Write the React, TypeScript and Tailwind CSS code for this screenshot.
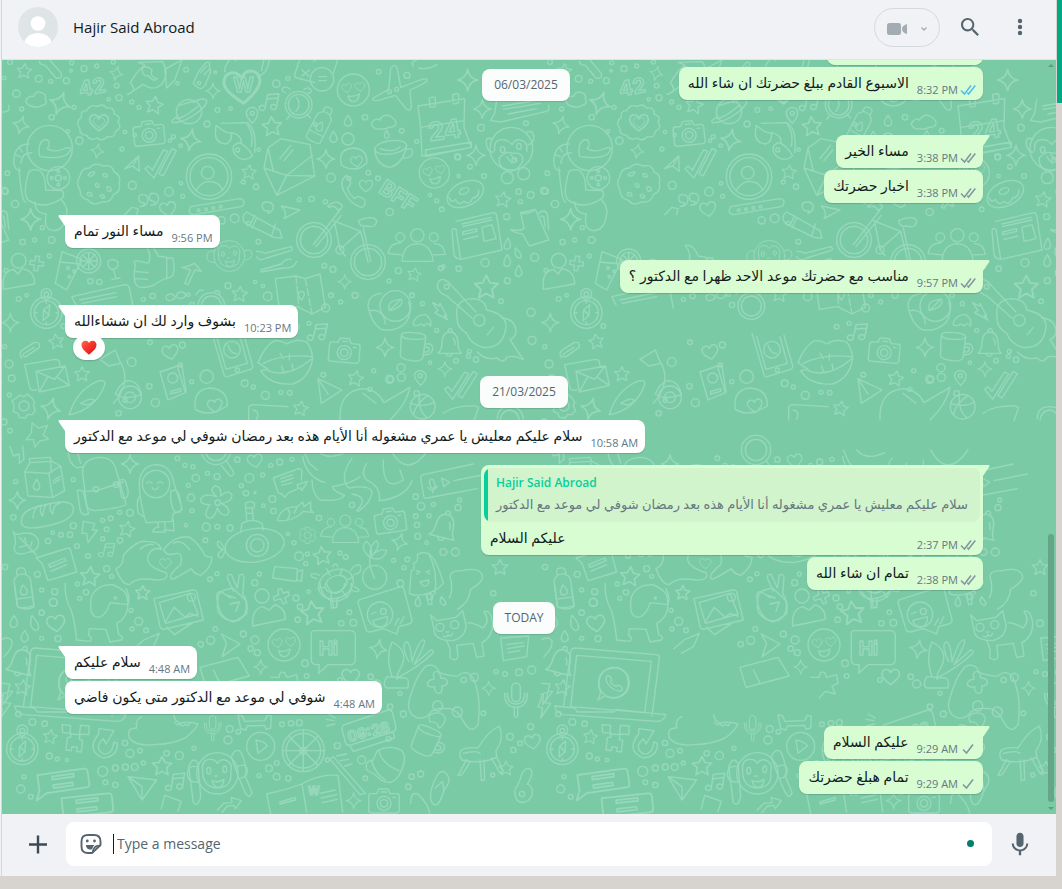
import type { ReactNode } from "react";

type Message = {
    id: number;
    text: string;
    time: string;
    out?: boolean;
    tail?: boolean;
    status?: "read" | "delivered" | "sent";
    quote?: { name: string; text: string };
    reaction?: boolean;
};

/* ---------- wallpaper ---------- */

function Star({ x, y, r = 26, a = 0 }: { x: number; y: number; r?: number; a?: number }) {
    return (
        <path
            transform={`translate(${x} ${y}) rotate(${a}) scale(${r / 26})`}
            d="M0-25 8-9 25-7 12 5 16 23 0 14-16 23-12 5-25-7-8-9Z"
        />
    );
}

function Spark({ x, y, r = 26, a = 0 }: { x: number; y: number; r?: number; a?: number }) {
    return (
        <path
            transform={`translate(${x} ${y}) rotate(${a}) scale(${r / 26})`}
            d="M0-28Q3-4 26 0 4 4 0 28-4 4-26 0-4-4 0-28Z"
        />
    );
}

function Heart({ x, y, r = 24, a = 0 }: { x: number; y: number; r?: number; a?: number }) {
    return (
        <path
            transform={`translate(${x} ${y}) rotate(${a}) scale(${r / 24})`}
            d="M0 22C-14 12-25 2-24-8-22-22-6-24 0-11 6-24 22-22 24-8 25 2 14 12 0 22Z"
        />
    );
}

function Place({ x, y, a = 0, s = 1, children }: { x: number; y: number; a?: number; s?: number; children: ReactNode }) {
    return <g transform={`translate(${x} ${y}) rotate(${a}) scale(${s})`}>{children}</g>;
}

function Camera() {
    return (
        <>
            <path d="M-38-25h16l6-14h28l6 14h20q8 0 8 8v42q0 8-8 8h-76q-8 0-8-8v-42q0-8 8-8Z" />
            <circle cy="4" r="21" />
            <circle cy="4" r="11" />
            <path d="M-8-30H8M26-14h8" />
        </>
    );
}

function LoveFace() {
    return (
        <>
            <circle r="48" />
            <Heart x={-20} y={-6} r={15} a={-12} />
            <Heart x={20} y={-10} r={15} a={-6} />
            <path d="M-16 18q18 4 34-6-2 22-17 23-13 0-17-17Z" />
        </>
    );
}

function Group() {
    return (
        <>
            <circle cy="-40" r="21" />
            <path d="M-48 42q2-54 48-56 44 2 50 56Z" />
            <circle cx="-54" cy="-34" r="14" />
            <circle cx="52" cy="-34" r="14" />
            <path d="M-48 22-92 18q4-34 40-34M50 22l38-2Q84-14 54-14" />
        </>
    );
}

function Person() {
    return (
        <>
            <circle cy="-38" r="22" />
            <path d="M-46 48q-6-54 30-60l14 14L10-14q38 6 38 46Z" />
            <path d="M34-36h14v-16h12v16h14v12H60v16H48v-16H34Z" transform="rotate(8 54 -30)" />
        </>
    );
}

function Compass() {
    return (
        <>
            <circle r="47" />
            <circle r="36" />
            <circle cy="-56" r="16" />
            <circle cy="-55" r="7" />
            <path d="M10-24 8 8-10 24-8-8ZM-8-8 8 8M0-36v8M0 36v-8M-36 0h8M36 0h-8" />
        </>
    );
}

function Bell() {
    return (
        <path d="M-34 24q12-10 12-34 2-30 24-30t24 32q0 22 10 32ZM-10 25q8 16 20 0M-4-40q0-10 7-10t6 10M12-20q6 8 6 18" />
    );
}

function Mic() {
    return <path d="M-13-38a13 15 0 0 1 26 0v26a13 15 0 0 1-26 0ZM-34-22q0 42 34 42t34-42M-26-22q0 32 26 32t26-32M-5 20v26q5 8 10 0V20" />;
}

function Bottle() {
    return <path d="M-14-52q0-12 14-12t14 12v12q12 6 12 18V56q0 6-26 6t-26-6v-78q0-12 12-18ZM-14-44h28M-26 32h52M0-10q-22 30 0 32 22-2 0-32Z" />;
}

function Ticks() {
    return <path d="M-52 12l10-8 12 14 38-58 12 6-48 76ZM-12 30l46-72 12 8-46 72-12-8" />;
}

function Note() {
    return <path d="M-12 20V-18L18-26V12M-12-6 18-14M-12 20a8 7 0 1 1-4-6M18 12a8 7 0 1 1-4-6" />;
}

function Bubble({ w = 100, h = 60 }: { w?: number; h?: number }) {
    return (
        <path
            d={`M${-w / 2} ${-h / 2}H${w / 2}q8 0 8 8V${h / 2}q0 8-8 8H${-w / 2 + 8}l-26 14 10-22V${-h / 2}ZM${-w / 4} -10H${w / 4}v7H${-w / 4}ZM${-w / 4} 10H${w / 5}v7H${-w / 4}Z`}
        />
    );
}

function Bicycle() {
    return (
        <>
            <circle cx="-104" cy="-8" r="52" />
            <circle cx="-104" cy="-8" r="41" />
            <circle cx="58" cy="58" r="52" />
            <circle cx="58" cy="58" r="41" />
            <path d="M-106 6-26-98 M-98 12-22-82M-62-110q24-20 38-6 12 14-10 18-6-16-26-8ZM-46-66 36-34-26 20-42-60M-26 20-10 40M36-34 58 58M44-44 66 56M30-66q42-18 54 0-2 24-30 16-22 4-24-16Z" />
            <circle cx="-26" cy="22" r="12" />
        </>
    );
}

function Mug() {
    return <path d="M-38-30q0-12 37-8 37 2 36 14l-8 60q-4 14-34 10-34-4-34-16Zm0 0q6 12 40 12 30 2 33-8M34-4q24-4 22 16-4 18-27 16M34 6q14-2 12 8-4 8-14 6" />;
}

function Calendar() {
    return (
        <>
            <path d="M-72-50 68-72l-2 86 22 60-148 26-4-82ZM-64 14 66-6M-50 82l138-24v16L-48 102ZM-38-74q10-4 18-2v26q-10 6-16 2ZM32-84q10-4 18-2v26q-10 6-16 2Z" />
            <text x="-44" y="50" fontSize="76" transform="rotate(-8)">24</text>
        </>
    );
}

function Envelope() {
    return <path d="M-60-56-22-84 66-66 80 28-34 86-72 4ZM-72 4-4 26 80 28M-34 86-4 26 74-34M-60-56-44 14M-24-24l32-40M-12-18 14-50" />;
}

function Astronaut() {
    return (
        <>
            <circle cx="0" cy="0" r="68" />
            <path d="M-32 12q0-42 26-36 10 14-2 26Q14 16 50 0q24-6 4 18-22 16-82 8-4-2-4-14Z" />
            <path d="M-62-12q-44 0-46 54 4 28 20 26M-54 14q-30 0-32 32M-90 0l8 12M-104 20l16 6M-92 60q8 104 20 102M-62 70q-22 72 0 88 42 26 88 0 24-10 12-30l-50-2q0-50-22-60-22-4-28 6Z" />
            <circle cx="26" cy="90" r="34" />
            <circle cx="26" cy="90" r="9" />
            <circle cx="26" cy="70" r="4" />
            <circle cx="26" cy="110" r="4" />
            <circle cx="6" cy="90" r="4" />
            <circle cx="46" cy="90" r="4" />
            <path d="M-44 162q0 34 34 36-10 46 20 50 34 0 40-46 8-20-14-46" />
        </>
    );
}

function Cookie() {
    return (
        <>
            <path d="M-60-24q4-24 28-24 18-20 40-6 30-6 34 18 22 8 16 34 6 24-18 34-8 26-36 22-24 14-40-6-24-4-24-30-14-20 0-42Z" />
            <path d="M-36-28q10-10 20-8-4 14-16 12ZM8-30q14-4 14 8-12 4-14-8ZM-14 0q10-4 12 8-12 6-12-8ZM20 10q12-6 14 10-14 6-14-10ZM-38 26q14-4 14 10-16 2-14-10ZM0 34q12-6 14 6-10 6-14-6Z" />
        </>
    );
}

function Laptop() {
    return (
        <>
            <path d="M-120-92q2-12 14-12l244 20q10 2 8 12l-22 172M-120-92l-22 166M-102-82l224 18-20 154-222-18ZM-168 70l60 6 8 12h110l6-8 150 16q-8 20-26 20L-140 96q-24-4-28-26Z" />
            <circle cx="10" cy="0" r="46" />
            <path d="M-38 52l8-22q-16-42 12-66 44-22 66 12 16 46-20 64-22 10-46 0Z" />
            <path d="M-8-22q-12 8 0 26t34 22q14-4 6-14-12-8-16 0-14-8-16-16 8-10-8-18Z" />
        </>
    );
}

function Monkey() {
    return (
        <>
            <circle r="62" />
            <path d="M-44-6q-4-36 22-36 16 0 22 12 8-14 24-10 24 8 16 36 6 46-40 48-44-2-44-50Z" />
            <ellipse cx="-26" cy="-8" rx="6" ry="10" />
            <ellipse cx="22" cy="-12" rx="6" ry="10" />
            <path d="M-8 8h8M-16 22q18 8 36-4-2 24-18 24-14-2-18-20ZM-60-20q-30-6-30 24 2 24 32 22M60-20q24-12 30 8 2 24-24 28" />
        </>
    );
}

// circles are [x, y, r] in the sheet's own units
const DOTS_TOP = [
    [30, 6, 7], [116, 56, 10], [152, 64, 6], [199, 62, 9], [215, 8, 6], [252, 26, 9], [213, 32, 4], [290, 18, 6], [340, 6, 6], [350, 77, 7], [13, 54, 5], [49, 101, 11],
    [65, 147, 6], [155, 172, 8], [222, 142, 6], [326, 118, 5], [357, 113, 9], [395, 126, 6], [238, 242, 11], [204, 214, 5], [375, 216, 5], [417, 142, 6], [366, 267, 6], [397, 376, 12],
    [22, 340, 7], [16, 394, 9], [45, 432, 11], [404, 225, 5], [520, 230, 6], [542, 257, 5], [510, 242, 5], [621, 192, 9], [652, 150, 7], [692, 146, 5], [558, 29, 7], [532, 70, 5],
    [597, 69, 5], [646, 37, 4], [829, 71, 11], [864, 55, 6], [507, 395, 13], [543, 370, 5], [548, 409, 6], [730, 366, 6], [768, 380, 8], [713, 270, 6], [776, 269, 5], [993, 353, 13],
    [1047, 355, 6], [945, 193, 5], [898, 419, 6], [935, 417, 8], [976, 425, 6], [1136, 35, 7], [1221, 46, 9], [1095, 172, 8], [1205, 212, 7], [1250, 244, 6], [1373, 292, 8], [1105, 338, 7],
    [1134, 355, 7], [1376, 348, 5], [1290, 405, 5], [1310, 422, 6], [1169, 456, 11], [1325, 448, 7], [127, 503, 6], [68, 546, 8], [104, 540, 6], [155, 540, 10], [148, 588, 6], [271, 664, 8],
    [298, 666, 8], [18, 631, 6], [56, 717, 7], [80, 706, 5], [190, 798, 7], [27, 912, 12], [35, 955, 10], [14, 860, 6], [665, 481, 11], [704, 475, 13], [745, 490, 6], [775, 545, 7],
    [765, 666, 5], [789, 678, 5], [803, 709, 13], [684, 677, 9], [430, 718, 6], [458, 708, 8], [565, 704, 5], [576, 735, 8], [973, 617, 7], [999, 628, 9], [993, 706, 7], [1065, 706, 9],
    [1022, 726, 6], [977, 744, 12], [890, 800, 7], [927, 790, 6], [395, 906, 13], [450, 847, 7], [547, 855, 9], [448, 979, 8], [466, 1028, 12], [575, 965, 6], [541, 915, 6], [734, 970, 10],
    [760, 981, 6], [796, 1006, 12], [843, 997, 6], [869, 998, 7], [970, 944, 7], [1195, 632, 9], [1167, 663, 6], [1236, 706, 7], [1267, 731, 6], [1310, 811, 6], [1405, 889, 6], [1204, 952, 12],
    [1171, 958, 9], [1121, 932, 6], [1110, 988, 6], [1290, 908, 5], [356, 1060, 8], [375, 1021, 6], [28, 1005, 6], [12, 1086, 9], [30, 1112, 7], [1340, 680, 7], [1250, 1000, 8], [1330, 620, 5],
    [1543, 300, 7], [1443, 203, 10], [1578, 190, 7], [1373, 290, 9], [1410, 320, 7], [1452, 348, 7], [1556, 395, 8], [1592, 405, 10], [1561, 425, 6], [1520, 470, 9], [1632, 392, 10], [1322, 625, 7],
    [1455, 608, 12], [1522, 662, 9], [1376, 626, 8], [1604, 592, 12], [1503, 724, 7], [1593, 757, 12], [1596, 841, 12], [1408, 874, 6], [1368, 902, 7], [1428, 899, 8], [1203, 923, 12], [1169, 958, 12],
];
const DOTS_MID = [
    [532, 25, 7], [555, 46, 6], [579, 50, 6], [587, 84, 11], [565, 106, 6], [573, 143, 11], [576, 182, 6], [622, 70, 6], [651, 80, 9], [712, 29, 8], [788, 75, 6], [748, 84, 13],
    [724, 107, 6], [738, 130, 8], [765, 128, 3], [817, 147, 10], [820, 183, 8], [790, 167, 5], [47, 95, 6], [220, 89, 6], [40, 202, 8], [220, 227, 9], [210, 254, 8], [183, 254, 7],
    [158, 248, 5], [144, 273, 8], [231, 288, 7], [308, 211, 6], [332, 205, 7], [359, 187, 6], [390, 188, 10], [320, 238, 7], [308, 266, 6], [360, 271, 8], [264, 318, 7], [320, 356, 9],
    [335, 379, 6], [112, 373, 9], [15, 351, 8], [125, 420, 6], [164, 425, 9], [160, 457, 12], [232, 402, 6], [258, 427, 8], [239, 445, 6], [558, 226, 5], [619, 231, 12], [652, 230, 7],
    [690, 234, 9], [616, 271, 7], [630, 388, 7], [651, 371, 6], [764, 398, 9], [778, 372, 6], [864, 252, 5], [882, 278, 6], [897, 319, 13], [922, 312, 6], [917, 341, 6], [957, 204, 8],
    [888, 444, 9], [926, 425, 5], [1020, 309, 6], [1037, 321, 7], [1056, 165, 8], [1247, 140, 8], [1263, 169, 11], [1300, 163, 6], [1247, 199, 7], [1287, 197, 6], [1251, 225, 8], [1253, 259, 9],
    [1280, 278, 5], [1222, 328, 7], [1181, 331, 6], [1212, 353, 6], [1201, 400, 10], [1330, 306, 10], [1366, 306, 12], [1374, 173, 9], [1379, 150, 6], [812, 46, 6], [839, 36, 9], [876, 28, 6],
];
const DOTS_LOW = [
    [125, 68, 8], [160, 37, 12], [125, 145, 6], [174, 146, 9], [393, 61, 6], [416, 94, 12], [438, 121, 7], [396, 117, 6], [646, 117, 7], [632, 151, 12], [602, 163, 8], [730, 132, 9],
    [765, 150, 12], [752, 176, 8], [772, 188, 9], [915, 220, 10], [900, 50, 8], [893, 89, 8], [1048, 67, 7], [1060, 98, 10], [1024, 100, 8], [920, 258, 7], [1020, 270, 7], [55, 372, 8],
    [97, 396, 10], [134, 401, 8], [375, 459, 8], [390, 490, 12], [420, 482, 7], [148, 498, 9], [172, 507, 6], [201, 510, 5], [308, 544, 15], [346, 534, 9], [376, 531, 9], [404, 531, 10],
    [430, 519, 6], [316, 577, 7], [346, 585, 8], [72, 560, 6], [62, 597, 12], [92, 620, 7], [500, 490, 8], [538, 497, 12], [582, 475, 6], [684, 450, 12], [689, 417, 10], [715, 425, 7],
    [846, 403, 7], [873, 400, 8], [898, 398, 9], [1012, 467, 9], [1085, 510, 12], [1096, 565, 7], [982, 510, 6], [830, 519, 7], [807, 535, 10], [830, 560, 10], [777, 557, 6], [865, 565, 8],
    [1112, 260, 8], [1130, 282, 12], [1170, 350, 8], [1200, 310, 6], [1210, 372, 9], [1166, 447, 7], [1235, 560, 8], [1262, 552, 9], [1225, 590, 8], [1391, 270, 8], [1423, 262, 12], [1450, 370, 7],
    [1488, 245, 6], [1515, 252, 7], [1557, 247, 10], [1595, 240, 12], [1592, 410, 9], [1530, 440, 10], [1560, 460, 7], [1478, 555, 6], [1500, 100, 10], [1290, 20, 9], [1480, 10, 8], [1540, 480, 8],
];

function Dots({ items }: { items: number[][] }) {
    return (
        <>
            {items.map(([x, y, r], i) => (
                <circle key={i} cx={x} cy={y} r={r} />
            ))}
        </>
    );
}

function TopDoodles() {
    return (
        <g>
            <Dots items={DOTS_TOP} />
            <Star x={73} y={33} r={23} a={5} />
            <Star x={463} y={135} r={27} a={10} />
            <Star x={816} y={199} r={30} a={-5} />
            <Star x={747} y={336} r={22} a={5} />
            <Star x={719} y={702} r={24} a={5} />
            <Star x={169} y={844} r={23} a={-10} />
            <Star x={246} y={942} r={23} />
            <Star x={1067} y={955} r={24} a={10} />
            <Star x={1243} y={643} r={21} a={10} />
            <Star x={902} y={1045} r={23} a={10} />
            <Star x={1459} y={681} r={36} />
            <Star x={1509} y={418} r={24} a={8} />
            <Spark x={349} y={40} r={20} a={15} />
            <Spark x={180} y={130} r={32} a={20} />
            <Spark x={639} y={93} r={22} />
            <Spark x={63} y={195} r={25} a={15} />
            <Spark x={572} y={240} r={30} a={10} />
            <Spark x={292} y={273} r={20} a={10} />
            <Spark x={978} y={297} r={26} />
            <Spark x={1403} y={60} r={30} />
            <Spark x={1428} y={286} r={28} />
            <Spark x={1447} y={147} r={26} />
            <Spark x={92} y={478} r={30} />
            <Spark x={31} y={788} r={26} />
            <Spark x={1034} y={665} r={20} />
            <Spark x={1155} y={862} r={26} />
            <Spark x={1335} y={927} r={21} />
            <Spark x={152} y={1046} r={30} a={15} />
            <text x="236" y="104" fontSize="62" transform="rotate(-10 270 80)">42</text>
            <text x="1144" y="402" fontSize="64" transform="rotate(32 1150 380)">BFF</text>

            {/* clouds */}
            <path d="M92 138q-18-6-12-22 10-10 20-6 8-20 24-12 16 4 12 18 8 18-10 20-10 10-34 2ZM1126 206q-20-12-6-24 10-8 18-2 14-20 32-12 20 12 18 24-4 10-20 10-14 8-42 4ZM1240 20q-10-14 10-20M1256 24q30 6 54-10" />
            {/* banana, unicorn and hand along the top edge */}
            <path d="M118 4q0 10 18 12l32 38q20 4 16-14L150 0M381 103q34-10 10-34 22-40 44-54l-20-8 72-2q24 36-4 70-24 20-54-2l-44 30ZM428 22q14-6 28 8-8 22 16 26-12 12-26-8-24 0-18-26ZM500 84 494 28 546 0 524 60ZM580 70 596 34 618 8q14-6 10 12l4 16-18 42q-12 18-34-8ZM602 38l18-20M612 44l18-18" />
            {/* w heart with flames */}
            <Heart x={727} y={80} r={54} a={-5} />
            <path d="M674 36Q672 14 700-12l6 14Q720-10 722-24M778 48q24-8 30-48M784 32l12-50" />
            <text x="700" y="96" fontSize="60">W</text>
            {/* calculator */}
            <path d="M902-10 884 44q0 8 8 10l52 14M1016-10 1000 40M906 30l20 18M928 30l-22 18M960-5l-20 8M956 50h22M956 62h22" />
            <circle cx="966" cy="58" r="35" />
            <Place x={1060} y={90}>
                <LoveFace />
            </Place>
            {/* plane */}
            <path d="M1172 26q12-20 20 0l10 56 58-22q26-8 20 4-18 14-50 26l4 52q-4 14-16 4l-32-40-54 16q-20 0-12-8l46-26Z" />
            <circle cx="1168" cy="95" r="6" />
            <circle cx="1190" cy="88" r="6" />
            {/* heart badge */}
            <path d="M244 172q-4-20 16-20 12-22 32-12 16-12 28 4 24-4 22 18 24 8 12 24 14 18-8 28 0 20-24 16-16 16-30 4-22 10-32-8-24-2-20-20-16-18 4-34Z" />
            <Heart x={297} y={187} r={28} />
            <Heart x={297} y={187} r={17} />
            <Place x={447} y={222} a={-6}>
                <Camera />
            </Place>
            {/* planet */}
            <ellipse cx="567" cy="155" rx="38" ry="36" />
            <path d="M534 168q-26 16-16 20 34 2 80-34 32-28 18-36-16-4-36 10M530 176q20 0 68-40M538 136l40-12" />
            {/* map pin */}
            <path d="M757 190q-20-20-18-34 6-14 20-14 14 4 14 16 0 14-16 32Z" />
            <circle cx="757" cy="160" r="6" />
            <Place x={812} y={126} a={10} s={1.1}>
                <Note />
            </Place>
            {/* alarm clock */}
            <circle cx="896" cy="134" r="40" />
            <circle cx="896" cy="134" r="31" />
            <path d="M888 112q12 10 8 28l-8 14M856 98q-14-6-8-14 10-8 22 4M912 88q14-10 22 4-2 10-10 6M868 168l-8 10M922 164l10 10" />
            <Place x={962} y={194} a={27} s={0.9}>
                <Bottle />
            </Place>
            <path d="M1044 166q-22 28 0 32 22-4 0-32ZM1000 214q-20 28 0 34 22-6 0-34ZM1160 212q-14 20 0 24 14-4 0-24Z" />
            {/* sunglasses */}
            <path d="M648 196q30 26 46 22 4 26-16 34-32-2-32-32ZM664 190 742 188q30 22 22 90M694 218q30 6 30 30M718 248q24 10 40 40-22 18-44 4-18-14-14-32 6-10 18-12ZM742 194q20 26 12 64" />
            {/* love heart person */}
            <circle cx="1044" cy="237" r="18" />
            <path d="M1024 314q-12-48 38-50 42 4 38 46l-20 14q-36 8-56-10Z" />
            <Heart x={1070} y={304} r={18} a={-8} />
            {/* coffee cup */}
            <ellipse cx="1172" cy="262" rx="48" ry="20" transform="rotate(-8 1172 262)" />
            <path d="M1124 268q4 46 44 54 40-8 52-64M1218 270q20-10 20 8-4 18-30 16M1140 266q40 14 60-6" />
            <Place x={1326} y={188}>
                <Calendar />
            </Place>
            <Place x={1303} y={339} a={-5} s={0.94}>
                <LoveFace />
            </Place>
            <Place x={149} y={264}>
                <Astronaut />
            </Place>
            <Place x={300} y={372}>
                <Cookie />
            </Place>
            {/* paper plane, ticks, avatar */}
            <path d="M374 326 416 288 418 334 398 318ZM398 318 416 288" />
            <Place x={486} y={310} a={-5}>
                <Ticks />
            </Place>
            <circle cx="627" cy="350" r="68" />
            <circle cx="627" cy="350" r="57" />
            <circle cx="623" cy="338" r="19" />
            <path d="M588 392q16-28 42-28 28 2 38 26" />
            <Place x={864} y={320}>
                <Envelope />
            </Place>
            {/* phone handset */}
            <path d="M1040 346q-24 16-8 48 16 36 50 48 18-4 12-22-22-18-30-4-20-18-22-32 20-14-2-38Z" />
            <Heart x={1098} y={377} r={20} />
            {/* quote marks, pencil, ruler */}
            <path d="M430 404q-14-2-14 12 2 14 16 12 6 8-12 12 24-2 24-22-2-14-14-14ZM462 400q-14-2-14 12 2 14 16 12 6 8-12 12 24-2 24-22-2-14-14-14ZM800 426q-14 0-14 14 4 16 20 12l-2 8q16-6 16-22-4-12-20-12Z" />
            <Heart x={504} y={447} r={24} a={-10} />
            <path d="M572 440 718 416q12 0 14 10 0 12-10 14L582 464q-14 0-14-10 0-10 4-14ZM374 464l22-22 18 4-4 18M844 438l56 12-48 26q12-18-8-38ZM740 456l100 56 6 22-24-2-86-42q-16-20 4-34ZM826 492l-12 38M770 474l-14 30M764 466l-14 30" />
            <circle cx="596" cy="451" r="4" />
            <circle cx="618" cy="448" r="4" />
            <circle cx="640" cy="444" r="4" />
            <circle cx="662" cy="440" r="4" />
            <Place x={1046} y={548}>
                <Bicycle />
            </Place>
            <Place x={1252} y={564} s={0.95}>
                <Group />
            </Place>
            {/* donut */}
            <ellipse cx="1396" cy="402" rx="58" ry="36" transform="rotate(-25 1396 402)" />
            <ellipse cx="1392" cy="393" rx="15" ry="9" transform="rotate(-25 1392 393)" />
            <path d="M1346 412q10 20 20 6 10 22 26 6 16 14 26-10 20-2 18-24" />
            {/* speech sheet and hushed monkey */}
            <path d="M1490 120l-6 40-12 22 30 4 138-32q10-4 6-18M1508 138l108-18M1510 148l110-18M1524 162l86-16" />
            <circle cx="1534" cy="266" r="64" />
            <path d="M1484 272q-4-40 34-32 10 4 18 14 10-18 26-14 24 6 18 34M1478 238q-24-12-18 20 6 20 20 18M1578 218q20-12 24 14-2 20-18 22M1498 294q20-24 40-14 34-4 30 24-16 34-46 30-28-14-24-40ZM1520 290l16 20M1532 284l16 18" />
            <ellipse cx="1508" cy="269" rx="7" ry="9" />
            <ellipse cx="1557" cy="259" rx="7" ry="9" />
            <circle cx="1522" cy="353" r="18" />
            <circle cx="1571" cy="341" r="18" />
            {/* newspaper */}
            <path d="M1368 484l112-26q8 0 10 8l16 104-124 28q-16-2-20-14l-6-72q0-10 12-4l14 90M1386 492l88-20M1388 500l88-20M1388 516l42-10v8l-42 10ZM1392 538l42-10M1446 502l30-8 12 42-36 8Z" />
            {/* watering can with drops */}
            <path d="M1562 458l44-10 40 92-58 18-20-36q-34-6-36-14 24 8 40-2ZM1562 458q20 8 44-10M1614 462q20-18 28 0l4 46M1622 470q8-6 10 4l4 26M1524 534q-22 34-2 34 18-4 2-34ZM1546 564q-4 32 14 30 12-8-14-30ZM1522 584q-20 32-2 36 22-6 2-36ZM1556 616q-20 30 0 34 20-6 0-34Z" />
            {/* guitar */}
            <path d="M1312 680q0-22 18-22 16 6 24 18l74 80M1312 680q8 22 26 26l78 68M1372 780q-12-60 42-64 42 0 46 34 58 12 58 50-8 68-70 62-36-10-48-42-30-20-28-40ZM1462 824l18-22" />
            <circle cx="1438" cy="781" r="17" />
            <path d="M1506 774q40 4 42 40-2 20-18 24 20 34 40 60-30-14-50-6-8 20-30 2-34 8-58-18" />
            <Place x={56} y={640}>
                <Person />
            </Place>
            {/* drinks */}
            <path d="M186 575 246 598 200 690 166 670ZM180 606l62 6" />
            <circle cx="266" cy="603" r="36" />
            <circle cx="266" cy="603" r="26" />
            <path d="M266 577v52M240 603h52M248 585l36 36M284 585l-36 36M324 604q-2 22 14 24 18-2 16-22-14-14-30-2ZM340 628l8 28M336 658l24-4" />
            <circle cx="204" cy="624" r="4" />
            <circle cx="222" cy="634" r="4" />
            <circle cx="208" cy="650" r="4" />
            {/* thumbs up */}
            <path d="M446 610q10-30-10-54 24-6 38 32l26 4v62q-28 12-40 22-40 14-52-2-10-16-2-60-8-10 4-12ZM500 594l18 0q8 28 0 54l-18 8M404 634l40 4M406 656l36 2" />
            <path d="M546 622q24-4 38-12l20 24-20-4-20 44-10-4 18-40Z" />
            <Place x={688} y={588} s={0.75}>
                <Monkey />
            </Place>
            <path d="M770 574q16 0 24 6l78-20q12 8 0 12l-72 22q-24 12-30-4M782 630l62-18q14-18 30-14M782 636l68-12q30 4 40-20" />
            {/* map */}
            <path d="M826 656 888 648 916 656 960 642 976 742 936 762 892 740 838 748Z" />
            <path d="M888 648l8 90M916 656 936 762" strokeDasharray="22 8" />
            <path d="M904 720q-18-22 0-26 18 4 0 26Z" />
            <Place x={139} y={758}>
                <Compass />
            </Place>
            <path d="M216 710l158-36q12 0 14 10l12 60M216 710q4 12 12 24M240 720l108-22M246 730l104-20M500 706q-6 14 8 16 14-2 18-12-10-14-26-4ZM532 700q-6 14 8 16 14-2 18-12-10-14-26-4Z" />
            <circle cx="634" cy="738" r="40" />
            <circle cx="634" cy="738" r="30" />
            <path d="M588 704q12-20 22-12M644 694q16-6 16 10" />
            {/* sleeping bird */}
            <circle cx="1186" cy="738" r="46" />
            <path d="M1144 700q-40 4-40 40 10 50 40 68 40 10 74-20 20-32 8-62M1110 752q40-8 46 40M1168 750q-8-30 36-32 10 22-36 34ZM1170 750l30-30" />
            <path d="M1298 728l20 10 2-8 20 38-8-2 12 14-40-22 10-6Z" />
            <path d="M1240 786q12-24 38-22 20 16 14 34-10-14-20 0-10-10-16-2-20 4-16-10Z" />
            <Place x={1242} y={856}>
                <Mug />
            </Place>
            <Place x={1348} y={856}>
                <Bell />
            </Place>
            <Place x={957} y={816} a={12} s={1.1}>
                <Note />
            </Place>
            <Place x={1033} y={874} a={5}>
                <Camera />
            </Place>
            {/* paperclip, envelopes, scooter */}
            <path d="M66 894q-14-16 4-26l32-20q20-4 16 14l-40 28q-10 2-8-8l32-20M74 914l92-16q10 0 12 8l2 12M74 914l16 72q4 8 20 4M108 934l88-16 12 58-90 20ZM108 934l56 24 32-40M118 996l24-44M208 976l-36-24" />
            <Heart x={511} y={876} r={24} a={-12} />
            <path d="M208 1064q20-72 84-100 30-8 20 16-30 70-104 84ZM242 1030q30-18 40-10-10 22-40 10ZM300 898l46-28 16 40-36 8ZM364 910q30 60-24 120M424 1004q-8-42-42-42-22 8-36 40 30 20 78 2Z" />
            <circle cx="390" cy="1012" r="34" />
            <circle cx="390" cy="1012" r="16" />
            {/* id card, heart person */}
            <path d="M480 936 532 918 556 998 504 1020ZM532 918l14-2 12 80M512 994l30-8v8l-30 8Z" />
            <circle cx="518" cy="954" r="15" />
            <circle cx="620" cy="950" r="20" />
            <path d="M586 1048q-8-60 44-64 54 4 52 54l-36 18q-36 8-60-8Z" />
            <Heart x={645} y={1037} r={22} a={-8} />
            {/* phone */}
            <path d="M636 820 672 944q2 8 10 6l70-22q8-4 6-10L732 826M650 830l28 98 64-18-22-80" />
            <circle cx="696" cy="869" r="25" />
            <circle cx="712" cy="930" r="6" />
            <path d="M684 856q10 28 26 24" />
            {/* lips */}
            <path d="M774 908q20-50 50-66 20 0 36 10 28-18 60-6 16 20 18 50-10 60-60 76-70 4-96-40l22-4ZM790 910q60-30 144-20M804 932q60 24 130-34M840 880l10 16M868 882v18M850 934l-6-18M880 930l-4-18" />
            <circle cx="72" cy="1038" r="15" />
            <path d="M58 1006l14 4 10-8 14 12 8 12-4 10 6 16-10 12-14 0-6 10-18-2-4-12-14-6 2-18-6-14 14-8Z" />
            {/* basketball, ticks, pin */}
            <circle cx="1268" cy="1040" r="37" />
            <path d="M1232 1030q40 14 72-4M1258 1004q-4 50 24 70M1284 1006q-36 24-44 58M1262 976q-22-22-18-34 6-12 20-10 14 4 14 16 0 14-16 28Z" />
            <circle cx="1261" cy="947" r="6" />
            <Place x={1386} y={976}>
                <Ticks />
            </Place>
            {/* rocket and the band above the middle sheet */}
            <path d="M1020 1080q-4-88 70-94 44 4 62 42l78-46q-10 50-60 98M1088 1000l40 30M954 956l72 34-62 40ZM954 956l30 46" />
            <path d="M746 1080v-38q4-8 12-8l106 6M760 1050q20 4 10 28M1330 1060q30-24 96-22l10 4-14 40M1492 1076q0-36 38-36 34 0 40 36M1500 1080q4-28 30-30 24 4 28 30" />
            <Place x={112} y={1122} s={0.9} a={10}>
                <path d="M-24-34 0-20 28-34 20 0 40 10 12 22 0 44-10 20-34 26-20 0Z" />
            </Place>
        </g>
    );
}

function MidDoodles() {
    return (
        <g transform="translate(0 1170)">
            <Dots items={DOTS_MID} />
            <Spark x={52} y={151} r={25} />
            <Spark x={390} y={42} r={26} />
            <Spark x={1199} y={276} r={24} a={15} />
            <Star x={381} y={237} r={24} a={12} />
            <Star x={270} y={379} r={30} a={5} />
            <Star x={428} y={428} r={22} a={5} />
            <Star x={967} y={317} r={28} a={-8} />
            <path d="M30-10l10 28 18-6v28l14-12-4-40" />
            {/* milk carton */}
            <path d="M74 66 90 38 88 26 150 22 156 34 182 48 194 122 158 142 84 138ZM74 66l72 4 36-22M146 70l12 72M90 38l62-4 2 34M110 88q-20 30 0 32 18-4 0-32ZM160 92l20-12M160 100l20-12" />
            {/* bread */}
            <path d="M64 212q4-34 58-44 90-26 98 4 4 34-56 50-76 20-94 6-8-6-6-16ZM98 204q6-40 26-38-8 20 4 32 4-40 24-38-6 20 6 32 4-34 22-32" />
            {/* backpack */}
            <path d="M248 70q-2-44 52-48 42 0 50 44l28 96q0 10-94 20-22-2-24-18ZM250 124l40-2 80-26M232 122q12-4 18 4l16 66q-22 8-26-14ZM356 92q20-10 22 8 12 32 2 42-14 8-16-4ZM204 0q0 40 28 54l16-4M230 0l12 40" />
            <circle cx="288" cy="118" r="8" />
            <circle cx="348" cy="104" r="8" />
            {/* parka */}
            <path d="M418 110q-2-62 50-66 44 0 54 56l24 74q-10 16-26 16l-4 24-78 4q-18-60-20-108ZM418 140q-10 10-4 48l16 12M512 124q18-10 26 12l8 44M512 124q-2 40 12 62h18M458 246q2-14 18-14l-4-16M458 246l38 0-2-30M492 240l30 2-2-32" />
            <circle cx="468" cy="102" r="41" />
            <path d="M440 100q8-10 16 0M472 100q8-10 16 0M456 112q8 14 20 0" />
            {/* leaf, chat sheet */}
            <path d="M40 244q4 14 26 6 42-6 50 26-2 30-28 30-40 16-46-10 10-20-2-52ZM58 262l52 54M84 284l-26 8M74 264l4 14M96 274l-4 14M108 324l96-30q8 0 8 8l18 64-86 26-18-52ZM146 344l48-20 4 8-48 20ZM152 364l48-20" />
            <path d="M250 214l34 6-6 20 14 0-28 38-4-28h-14Z" />
            <Place x={324} y={300} a={12} s={0.9}>
                <Note />
            </Place>
            <Place x={70} y={414} a={-8} s={0.95}>
                <Bottle />
            </Place>
            {/* heart hands */}
            <path d="M348 356q24-10 22-40 40-46 68-42 40 0 46 24-28-10-40 20-10 30 54 50 12 22-30 22-58-10-80 14-24-2-40-48ZM490 298q40-46 80-36 28 20 46 56l20 4q0 30-34 54-20-4-28-20-40 26-58 32-16-10 26-44 10-42-22-32-20 6-30-14ZM420 298q20-18 40-14M520 280q24-16 50 20" />
            <Heart x={496} y={340} r={17} />
            {/* magnifier, flower */}
            <circle cx="648" cy="0" r="44" />
            <circle cx="648" cy="0" r="32" />
            <path d="M664 46 690 78q14 0 10-14L680 34" />
            <Heart x={765} y={32} r={22} a={-10} />
            <path d="M650 140q-24-20-6-32 20-2 18 30 26-22 34-2 0 20-32 24 30 16 20 32-18 12-32-18-8 32-26 30-18-8 4-40-30 0-28-16 8-20 48-8Z" />
            <circle cx="653" cy="158" r="8" />
            {/* submarine */}
            <ellipse cx="764" cy="286" rx="89" ry="50" transform="rotate(-8 764 286)" />
            <circle cx="772" cy="286" r="33" />
            <circle cx="772" cy="286" r="20" />
            <path d="M722 246l4-26q30-18 60 0l4 20M740 210l-4-50q14-10 28 0l-2 14-6 2 4 32M738 174h16M738 190h18M674 296q-20-36-22-14 4 14 18 16-24 14-12 24 10 8 18-22" />
            <path d="M820 84l76-28q8 0 10 8l-2 26M820 84l14 44 12 4 8 10 12-14 24-10M842 86l36-12M844 96l36-12M846 106l30-8M892 104l30-10-16 28-4-8-8 2Z" />
            {/* fish */}
            <path d="M832 212q10-42 60-42l16-14 4 14 20-14 0 24 8 8-30-4q-30 32-78 28ZM892 170l-10 20M862 176q14 12 0 34" />
            {/* film roll */}
            <path d="M908 20q10 60 66 78M936 90q0 40 24 60 60 6 74-14-30-10-38-26 60-10 84-30M1056 24q-40 60-10 90 60-10 70 10 0 30-40 60l-6-2q40-40-14-50M1100 40q-20 30 0 50 44 20 38 62 80-10 98-60M1150 30q-4 100 60 60l-10-30M910 0l18 40 24 20M1172 0q50 90 112 0M950 0q30 34 84 8" />
            <Place x={923} y={256} s={0.6}>
                <circle r="18" />
                <path d="M-10-40H8l4 14 16-4 14 16-10 12 10 14-14 18-16-4-4 14h-18l-4-14-16 2-12-16 8-14-8-12 12-18 16 4Z" />
            </Place>
            <Place x={1036} y={244} s={0.8}>
                <Group />
            </Place>
            <Place x={1171} y={214} a={-8}>
                <Camera />
            </Place>
            <Place x={1330} y={236} a={14} s={1.1}>
                <Bell />
            </Place>
            {/* voice note */}
            <path d="M1262 84q0-8 8-10l150-32M1262 84l10 58q4 4 10 2l150-28M1325 84l24 12-18 14ZM1362 92l100-20M1288 94q8-14 14 0l4 18q-10 8-14-2ZM1284 112q12 20 28-4M1298 122v6" />
            {/* sprout */}
            <circle cx="1124" cy="382" r="36" />
            <path d="M1124 386q-20-40-14-66M1110 322q-34-30-10-48 24 20 10 48ZM1110 322q-2-40 20-50 14 20-20 50ZM1112 322q24-30 48-20-14 36-48 20Z" />
            {/* camcorder, turtle */}
            <path d="M824 350l68 6-2 38-72-10ZM892 364l16-4-4 34-14-6" />
            <ellipse cx="1008" cy="402" rx="54" ry="42" transform="rotate(-25 1008 402)" />
            <ellipse cx="1008" cy="402" rx="34" ry="24" transform="rotate(-25 1008 402)" />
            <path d="M990 376l-10-20M1020 374l6-18M1042 390l18-10M1028 424l14 18M994 430v18M974 412l-20 4M1052 362q14-24 30-14 6 20-20 26M998 350q10-16 16 0M950 386q-24-6-14-14 14-2 22 4M996 446q4 40 14 22l2-26M1054 420q20 10 24 0l-14-10" />
            {/* ice lolly */}
            <path d="M1228 430l6-68q14-4 6-22 16-2 12-26 18-12 34-2 24 14 44 88-20 24-60 34-30 4-42-4ZM1286 310q30 60 18 122M1278 434l8 30 10-2-4-34M1248 362l12 4-10 6M1290 362l-12 4 12 6M1260 396l26-6q2 18-12 18-10-2-12-14" />
            <path d="M1348 444q10-20 6-50-16-34 34-32 40-10 54 6 20 20-30 50-4 40-40 60" />
            {/* peace hand */}
            <path d="M700 424l-18-40q0-14 12-10l18 40 6-38q12-8 14 6l-4 50q18 20 12 60l-40 24q-46-10-50-80 6-20 24-4l18 12M676 434l30 10" />
            <circle cx="786" cy="438" r="21" />
            <path d="M834 418l10-2 6 14 14-6 4 12-14 8 6 14-10 4-8-16-18 6-4-10 16-8Z" />
        </g>
    );
}

function LowDoodles() {
    return (
        <g transform="translate(0 1590)">
            <Dots items={DOTS_LOW} />
            <Star x={428} y={8} r={22} />
            <Star x={68} y={292} r={24} a={8} />
            <Star x={151} y={440} r={22} a={8} />
            <Star x={486} y={528} r={30} />
            <Star x={938} y={68} r={36} a={-8} />
            <Star x={1500} y={-68} r={24} />
            <Star x={1518} y={535} r={22} />
            <Spark x={782} y={231} r={20} />
            <Spark x={1135} y={177} r={26} a={10} />
            <Spark x={1466} y={295} r={20} />
            <Spark x={1061} y={632} r={22} />
            <path d="M42 76q-22 32-2 36 24-4 2-36ZM96 76q-12 34 10 46 24-6-10-46ZM74 122q-20 26-2 34 24-6 2-34ZM1255 20q-18 20-2 30 16-4 2-30ZM1324 20q-10 20 8 26 14-4-8-26Z" />
            <Heart x={168} y={100} r={27} a={-8} />
            <path d="M44-10l8 60q28 14 50 0L94-10M6 148q20-10 30 4 4 20-24 48" />
            {/* dog */}
            <path d="M196-20q-4 40 18 82 10 30 16 88l40 4q10-10-4-18l2-20 50 2 12 38 34-6q10-10-8-16l-6-34q40-20 32-74 0-24-44-42-50 0-64 38-10 60 22 60 24-6 34-44l54 6q8-20-6-48" />
            <circle cx="346" cy="24" r="3" />
            {/* photo */}
            <path d="M462 26 578 0q10-2 12 6l20 84-120 28q-8-2-10-8ZM478 38l92-28 24 62-98 28ZM496 96l26-44 34 30 14-12 24 8M500 112l24 22 54-36" />
            <circle cx="574" cy="22" r="12" />
            {/* hand, person, lifebuoy */}
            <path d="M656 14q-8 40 0 54 20 30 58 24 30-14 24-60l-40-38-30 8ZM690 42l28-6-10 28M758 108q-4-50 30-58l20 10 16-16q34 10 32 44Z" />
            <path d="M960-20q6 50 48 54 50-10 46-54M980-20q6 28 28 30 24-6 26-30M992 34l2 20 16-2v-18" />
            {/* winking photo card */}
            <path d="M1074 38q0-8 8-10l120-38q8 0 10 8l24 92q0 10-10 12l-30 8-6 22-40-16-40 10q-10 0-12-8Z" />
            <circle cx="1140" cy="74" r="38" />
            <circle cx="1150" cy="64" r="9" />
            <path d="M1114 72l14-6M1118 92l44-12q2 30-20 30-18 0-24-18ZM1196 86l-12 20M1212 80l-12 22" />
            <Place x={60} y={222} a={14} s={1.1}>
                <Bell />
            </Place>
            <Place x={212} y={278}>
                <Laptop />
            </Place>
            <path d="M6 280l24 2-6 22 14 0-30 40 2-30-14-2M402 176l30-26 46-20-18 40-36 20M664 132l56 30-54 38 14-40ZM600 232l114-30 34 56-130 34ZM640 240l20 40" />
            <Place x={852} y={165}>
                <LoveFace />
            </Place>
            <path d="M940 122h112q14 2 14 14v74q-2 14-14 14h-68l-28 26 2-26h-12q-12-2-12-14v-78q0-8 6-10Z" />
            <text x="956" y="196" fontSize="58">Hi</text>
            <Heart x={1052} y={260} r={26} />
            <path d="M812 262l26 0q0-20 16-14l6 14 30-8 4 26-18 8 10 24-30-8-18 20" />
            {/* plant in pot */}
            <path d="M1160 260l58 4q10 4 6 30l-62 0q-12-4-8-20ZM1176 260q-20-60 0-104 60 30 18 92-8 30 0 14 60-30 102-70 10-10-4-12l-50 44q40-70 30-74-14-4-36 66-4-60-18-60-16 10 8 58" />
            {/* cat */}
            <path d="M1292 74l18 18 58-10 20-20 10 44q0 36-40 46-56 0-56-34ZM1340 152l10 24v28q20 12 24-4l-4-34 50-6 10 42 22-4-6-40q34-20 32-60-6-40-26-34 20 30-4 50-20-14-44-16" />
            <circle cx="1320" cy="112" r="12" />
            <circle cx="1364" cy="104" r="12" />
            <path d="M1338 126l8 0M1330 138q10 8 14-4 8 10 14-4M1502 144l84-6-6 62-70 12ZM1520 164l50-6M1522 176l50-8M1524 188l36-6" />
            {/* croc, alarm mic, toy */}
            <path d="M388 444q-10-30 22-30-6-26 16-34M388 444q20 26 74 20 60-2 96-22 26-20 36-40-30-10-54-2-20-10-18-26M524 396q8 14 16 4 8 14 16 2 8 10 14-2" />
            <Place x={638} y={416} s={0.75}>
                <Mic />
            </Place>
            <path d="M714 374l14 4 6 16 60-2 8-16 12 2-2 36-14 4-4-12-52 2-4 12-16-4Z" />
            {/* gamepad */}
            <path d="M1228 330q20-74 50-102 30-10 40 20 34 12 56 10 24-22 44 4 28 60 16 142-20 30-40-4-26-50-54-44-40-4-52 16-24 24-52 2-16-18-8-44ZM1300 252q10-16 20 0l2 12q22 0 20 16-4 8-16 8 2 24-12 22-12-4-10-20-22 4-22-10 4-12 20-12Z" />
            <circle cx="1313" cy="348" r="15" />
            <circle cx="1372" cy="366" r="15" />
            <Place x={1548} y={332}>
                <Mic />
            </Place>
            <path d="M1630 310l-16 40 14 4-6 30 30-44-16-2 8-30Z" />
            <Place x={67} y={477}>
                <Compass />
            </Place>
            {/* creeper, redo */}
            <path d="M186 404l26 2-2 26 28 2 4-28 26 2-2 26-26-2-2 16 10 4-4 34-14-2 2-12-16-2-2 12-16-2 4-38 10 0 2-12-26-2ZM296 432q-40 50 14 72 44-4 42-44l-10-4q-6 40-32 36-30-20 0-46l8 16 24-40-46-6Z" />
            <Place x={652} y={550}>
                <Monkey />
            </Place>
            <path d="M566 530q14-34 28-10l8 100q-8 34-22 18ZM694 500q14-30 30-12 20 50 12 70l20 50q-8 22-20 0l-22-50Z" />
            {/* play, orange */}
            <circle cx="782" cy="469" r="42" />
            <path d="M768 450q30 6 34 18l-28 22ZM910 420v124M848 482h124M866 438l88 88M954 438l-88 88" />
            <circle cx="910" cy="482" r="63" />
            <circle cx="910" cy="482" r="52" />
            <circle cx="910" cy="482" r="10" />
            {/* digital clock */}
            <path d="M1026 418q0-12 8-14l130-44q12 0 14 10l10 42q0 10-10 14l-130 40q-10 0-12-10ZM1050 468l10 16 124-40-4-16M984 372l22 12M978 388l24 4M980 408l24-6" />
            <text x="1040" y="442" fontSize="44" transform="rotate(-14 1100 420)">09:28</text>
            {/* croissant, mug, chair */}
            <path d="M1100 540q-6-30 18-28l14-30q40-20 74 0 14 20 2 50-20 60-62 40l-24-20ZM1136 482q10 40 60 60M1114 510q10 40 42 60" />
            <path d="M1290 396q-10-20 10-26 30-6 36 16-6 26-20 28-2-20-26-18Z" />
            <Place x={1282} y={450} a={18}>
                <Mug />
            </Place>
            <path d="M1384 480q20-10 50-6 30-50 64-66 16 40-10 74l2 20q-50 22-104 8-12-14-2-30ZM1400 508l-26 48 12-2 26-40M1440 510l4 62 10-2-2-60M1474 504l26 46 10-6-20-44M1390 490q40-10 50 0" />
            <Heart x={1598} y={455} r={24} a={-10} />
            <Place x={190} y={568} a={-8} s={1.3}>
                <Bubble w={100} h={36} />
            </Place>
            <Place x={262} y={640} a={-6} s={1.3}>
                <Bubble w={100} h={36} />
            </Place>
            <path d="M384 560l86 10-44 60ZM384 560l42 30v36M494 616l50 18-10 30M494 616l-10 40M1000 500l96 110-16 4-90-106ZM1010 498l30-6M1020 512l26-4M1034 528l22-6" />
            <Place x={530} y={575} a={8} s={1.1}>
                <Note />
            </Place>
            {/* open book */}
            <path d="M800 612q54-10 106-30 50-30 108-26l14 110M800 612l12 60M906 582l14 84M840 636l46-14v8l-46 12ZM960 610l46-10M964 624l46-10M966 638l46-10M652 660l20-20 24-2-2-16 30 10-18 24-4-10-20 2-16 20" />
            <text x="924" y="614" fontSize="34">W</text>
            <Place x={1152} y={636}>
                <Camera />
            </Place>
            {/* sandals, key */}
            <path d="M1300 580q20-50 38-30 20 20-6 50-14 50-30 44-20-14-2-64ZM1306 594l22-20 4 30M1232 640q0-40 24-26 30 30 34 60M1560 570q10-40 30-34 14 14-8 46 20 10 14 36-20 30-44 14-16-30 0-44Z" />
            <circle cx="1566" cy="612" r="8" />
        </g>
    );
}

function Wallpaper() {
    return (
        <svg className="absolute inset-0 h-full w-full" aria-hidden="true">
            <defs>
                <pattern id="doodles" width="1620" height="2262" patternUnits="userSpaceOnUse" patternTransform="translate(-2 0) scale(0.33333)">
                    <g
                        id="sheet"
                        fill="none"
                        stroke="#97d8bb"
                        strokeWidth="4"
                        strokeLinejoin="round"
                        strokeLinecap="round"
                        fontFamily="Inter, sans-serif"
                        fontWeight="700"
                    >
                        <TopDoodles />
                        <MidDoodles />
                        <LowDoodles />
                    </g>
                    <use href="#sheet" x="-1620" />
                </pattern>
            </defs>
            <rect width="100%" height="100%" fill="url(#doodles)" />
        </svg>
    );
}

/* ---------- icons ---------- */

function StatusIcon({ status }: { status: "read" | "delivered" | "sent" }) {
    return (
        <svg
            width="16"
            height="12"
            viewBox="0 0 16 12"
            fill="none"
            stroke={status === "read" ? "#53bdeb" : "#8696a0"}
            strokeWidth="1.6"
            aria-label={status}
        >
            {status === "sent" ? (
                <path d="M3 6.5 6.5 10 13 1.5" />
            ) : (
                <path d="M1 6.5 4.5 10 11 1.5M7.3 8.800 8.5 10 15.3 1.5" />
            )}
        </svg>
    );
}

function StickerIcon() {
    return (
        <svg width="22" height="22" viewBox="0 0 22 22" fill="none" stroke="#54656f" strokeWidth="1.900" aria-hidden="true">
            <path d="M12 20H8q-6.500 0-6.500-6.500v-5Q1.500 2 8 2h6q6.500 0 6.500 6.500V12L12 20Z" strokeLinejoin="round" />
            <path d="M20.500 12.500Q16 12.500 14.500 14.500 13 16.500 12.500 20" strokeWidth="1.500" />
            <path d="M5.800 12h8.700q-1.500 1-2.300 4-.8.600-2 .600-3.600 0-4.400-4.600Z" fill="#54656f" stroke="none" />
            <circle cx="7.300" cy="8" r="1.400" fill="#54656f" stroke="none" />
            <circle cx="14.500" cy="8" r="1.400" fill="#54656f" stroke="none" />
        </svg>
    );
}

/* ---------- chat ---------- */

const messages: { gap: string; chip?: string; message?: Message }[] = [
    { gap: "mt-[2px]", message: { id: 1, text: "الاسبوع القادم ببلغ حضرتك ان شاء الله", time: "8:32 PM", out: true, status: "read" } },
    { gap: "mt-[35px]", message: { id: 2, text: "مساء الخير", time: "3:38 PM", out: true, tail: true, status: "delivered" } },
    { gap: "mt-[2px]", message: { id: 3, text: "اخبار حضرتك", time: "3:38 PM", out: true, status: "delivered" } },
    { gap: "mt-3", message: { id: 4, text: "مساء النور تمام", time: "9:56 PM", tail: true } },
    { gap: "mt-3", message: { id: 5, text: "مناسب مع حضرتك موعد الاحد ظهرا مع الدكتور ؟", time: "9:57 PM", out: true, tail: true, status: "delivered" } },
    { gap: "mt-3", message: { id: 6, text: "بشوف وارد لك ان ششاءالله", time: "10:23 PM", tail: true, reaction: true } },
    { gap: "mt-[38px]", chip: "21/03/2025" },
    { gap: "mt-3", message: { id: 7, text: "سلام عليكم معليش يا عمري مشغوله أنا الأيام هذه بعد رمضان شوفي لي موعد مع الدكتور", time: "10:58 AM", tail: true } },
    {
        gap: "mt-3",
        message: {
            id: 8,
            text: "عليكم السلام",
            time: "2:37 PM",
            out: true,
            tail: true,
            status: "delivered",
            quote: { name: "Hajir Said Abroad", text: "سلام عليكم معليش يا عمري مشغوله أنا الأيام هذه بعد رمضان شوفي لي موعد مع الدكتور" },
        },
    },
    { gap: "mt-[2px]", message: { id: 9, text: "تمام ان شاء الله", time: "2:38 PM", out: true, status: "delivered" } },
    { gap: "mt-3", chip: "TODAY" },
    { gap: "mt-3", message: { id: 10, text: "سلام عليكم", time: "4:48 AM", tail: true } },
    { gap: "mt-[2px]", message: { id: 11, text: "شوفي لي موعد مع الدكتور متى يكون فاضي", time: "4:48 AM" } },
    { gap: "mt-3", message: { id: 12, text: "عليكم السلام", time: "9:29 AM", out: true, tail: true, status: "sent" } },
    { gap: "mt-[2px]", message: { id: 13, text: "تمام هبلغ حضرتك", time: "9:29 AM", out: true, status: "sent" } },
];

function DateChip({ label }: { label: string }) {
    return (
        <span className="flex h-8 items-center rounded-lg bg-[#fafdfc] px-3 text-xs text-[#54656f] shadow-[0_1px_1px_rgba(11,20,26,0.15)]">
            {label}
        </span>
    );
}

function MessageBubble({ message }: { message: Message }) {
    const { out, tail, quote } = message;

    return (
        <div
            className={`relative rounded-lg shadow-[0_1px_1px_rgba(11,20,26,0.18)] ${out ? "self-end bg-[#d9fdd3]" : "self-start bg-white"} ${tail ? (out ? "rounded-tr-none" : "rounded-tl-none") : ""}`}
        >
            {tail && (
                <svg
                    width="8"
                    height="13"
                    viewBox="0 0 8 13"
                    className={`absolute top-0 ${out ? "-right-[7px] text-[#d9fdd3]" : "-left-[7px] -scale-x-100 text-white"}`}
                    aria-hidden="true"
                >
                    <path d="M0 0h6.500q1.500.3.800 1.700L1 11V13H0Z" fill="currentColor" />
                </svg>
            )}
            {quote && (
                <div className="px-[3px] pt-[3px]">
                    <div className="flex h-[54px] overflow-hidden rounded-lg bg-[#d1f4cc]">
                        <span className="w-1 bg-[#06cf9c]" />
                        <div className="flex flex-1 flex-col pt-1 pr-3 pl-2">
                            <span className="text-xs leading-[22px] font-semibold text-[#06cf9c]">{quote.name}</span>
                            <span dir="rtl" className="text-[13px] leading-[20px] whitespace-nowrap text-[#667781]">
                                {quote.text}
                            </span>
                        </div>
                    </div>
                </div>
            )}
            <div className="flex h-[33px] items-start justify-between gap-2 pr-[7px] pl-[9px]">
                <span dir="rtl" className="text-sm leading-[32px] whitespace-nowrap text-[#111b21]">
                    {message.text}
                </span>
                <span className="flex items-center gap-[2px] pt-[15px] text-[11px] leading-[15px] whitespace-nowrap text-[#667781]">
                    {message.time}
                    {message.status && <StatusIcon status={message.status} />}
                </span>
            </div>
            {message.reaction && (
                <button
                    type="button"
                    aria-label="Heart reaction"
                    className="absolute top-[30px] left-2 flex h-[25px] w-8 items-center justify-center rounded-full bg-white shadow-[0_1px_2px_rgba(11,20,26,0.2)]"
                >
                    <svg width="16" height="15" viewBox="0 0 16 15" aria-hidden="true">
                        <defs>
                            <linearGradient id="red" x1="0" y1="0" x2="1" y2="1">
                                <stop offset="0" stopColor="#ff6a50" />
                                <stop offset="0.45" stopColor="#f8352b" />
                                <stop offset="1" stopColor="#c4171c" />
                            </linearGradient>
                        </defs>
                        <path d="M8 14.800C4 11.500.5 8.500.5 4.800.5 2.400 2.200.7 4.300.7 6 .7 7.300 1.500 8 3 8.700 1.500 10 .7 11.700.7c2.100 0 3.800 1.700 3.800 4.100 0 3.700-3.500 6.700-7.500 10Z" fill="url(#red)" />
                    </svg>
                </button>
            )}
        </div>
    );
}

function Header() {
    return (
        <header className="flex h-[60px] shrink-0 items-center border-b border-[#e0e3e6] bg-[#f0f2f5] pr-6 pb-[5px] pl-4">
            <svg width="40" height="40" viewBox="0 0 40 40" className="shrink-0 rounded-full bg-[#dfe5e7]" aria-hidden="true">
                <circle cx="20" cy="16.500" r="7.300" fill="#fff" />
                <path d="M6 36q3-10 14-10t14 10q-6 4-14 4T6 36Z" fill="#fff" />
            </svg>
            <h1 className="ml-[15px] flex-1 text-[15px] text-[#111b21]">Hajir Said Abroad</h1>
            <button
                type="button"
                aria-label="Video call"
                className="flex h-[39px] w-[66px] items-center justify-center gap-[14px] rounded-full border border-[#d5d9dd] pt-1 text-[#a3acb2]"
            >
                <svg width="20" height="12" viewBox="0 0 20 12" fill="currentColor" aria-hidden="true">
                    <rect width="14" height="12" rx="2.500" />
                    <path d="M20 1v10q-5-1.500-5-5t5-5Z" />
                </svg>
                <svg width="6" height="4" viewBox="0 0 6 4" fill="none" stroke="currentColor" strokeWidth="1.300" aria-hidden="true">
                    <path d="M.5.5 3 3 5.500.5" />
                </svg>
            </button>
            <button type="button" aria-label="Search" className="ml-[18px] text-[#54656f]">
                <svg width="24" height="24" viewBox="0 0 24 24" fill="currentColor" aria-hidden="true">
                    <path d="M15.900 14.300H15l-.3-.3c1-1.100 1.600-2.700 1.600-4.300 0-3.700-3-6.700-6.700-6.700S3 6 3 9.700s3 6.700 6.700 6.700c1.600 0 3.200-.6 4.300-1.600l.3.3v.8l5.100 5.100 1.500-1.500-5-5.200zm-6.200 0c-2.600 0-4.600-2.100-4.600-4.600s2.100-4.600 4.600-4.600 4.600 2.100 4.600 4.600-2 4.600-4.600 4.600z" />
                </svg>
            </button>
            <button type="button" aria-label="Menu" className="ml-[26px] text-[#54656f]">
                <svg width="24" height="24" viewBox="0 0 24 24" fill="currentColor" aria-hidden="true">
                    <circle cx="12" cy="6" r="2.200" />
                    <circle cx="12" cy="12" r="2.200" />
                    <circle cx="12" cy="18" r="2.200" />
                </svg>
            </button>
        </header>
    );
}

function Composer() {
    return (
        <footer className="flex h-[62px] shrink-0 items-center bg-[#f0f2f5] pr-6 pb-[2px] pl-6">
            <button type="button" aria-label="Attach" className="mr-4 text-[#3b4a54]">
                <svg width="24" height="24" viewBox="0 0 24 24" fill="none" stroke="currentColor" strokeWidth="2.400" aria-hidden="true">
                    <path d="M12 3.500v18M3 12.500h18" />
                </svg>
            </button>
            <div className="flex h-11 flex-1 items-center rounded-lg bg-white pr-[18px] pl-[14px]">
                <button type="button" aria-label="Emoji and stickers">
                    <StickerIcon />
                </button>
                <span className="ml-[11px] h-5 w-px bg-[#111b21]" />
                <input
                    type="text"
                    aria-label="Type a message"
                    placeholder="Type a message"
                    className="ml-[3px] min-w-0 flex-1 bg-transparent text-sm outline-none placeholder:text-[#54656f]"
                />
                <span className="mb-[2px] h-[7px] w-[7px] rounded-full bg-[#008069]" />
            </div>
            <button type="button" aria-label="Record voice message" className="ml-4 text-[#54656f]">
                <svg width="24" height="24" viewBox="0 0 24 24" fill="currentColor" aria-hidden="true">
                    <path d="M11.999 14.942c2.001 0 3.531-1.530 3.531-3.531V4.350c0-2.001-1.530-3.531-3.531-3.531S8.469 2.350 8.469 4.350v7.061c0 2.001 1.530 3.531 3.530 3.531zm6.238-3.530c0 3.531-2.942 6.002-6.237 6.002s-6.237-2.471-6.237-6.002H3.761c0 4.001 3.178 7.297 7.061 7.885v3.884h2.354v-3.884c3.884-.588 7.061-3.884 7.061-7.885h-2z" />
                </svg>
            </button>
        </footer>
    );
}

export default function App() {
    return (
        <div className="flex h-screen bg-[#d7d3ce] pb-[13px] font-['Open_Sans','DejaVu_Sans',sans-serif]">
            <div className="w-[2px] border-r border-[#d1d7db] bg-[#f0f2f5]" />
            <div className="flex min-w-0 flex-1 flex-col">
                <Header />
                <main className="relative min-h-0 flex-1 overflow-hidden bg-[#7acba5]">
                    <Wallpaper />
                    <div className="relative flex h-full flex-col justify-end pr-[73px] pb-5 pl-[63px]">
                        <div className="h-8 w-[156px] shrink-0 self-end rounded-lg bg-[#d9fdd3] shadow-[0_1px_1px_rgba(11,20,26,0.18)]" />
                        {messages.map((item, i) => (
                            <div key={i} className={`flex shrink-0 flex-col ${item.gap}`}>
                                {item.chip && (
                                    <div className="flex justify-center">
                                        <DateChip label={item.chip} />
                                    </div>
                                )}
                                {item.message && <MessageBubble message={item.message} />}
                            </div>
                        ))}
                    </div>
                    <div className="absolute inset-x-0 top-[9px] flex justify-center pr-[6px]">
                        <DateChip label="06/03/2025" />
                    </div>
                    <div className="absolute inset-y-0 right-0 flex w-[10px] flex-col items-center justify-between py-1">
                        <span className="border-x-3 border-b-3 border-x-transparent border-b-[#5f9c80]" />
                        <div className="flex flex-col items-center gap-[5px]">
                            <span className="h-[268px] w-[6px] rounded-full bg-[#65a688]" />
                            <span className="border-x-3 border-t-3 border-x-transparent border-t-[#5f9c80]" />
                        </div>
                    </div>
                </main>
                <Composer />
            </div>
            <div className="w-[6px] pl-px">
                <div className="h-[103px] bg-[#00a884]" />
            </div>
        </div>
    );
}
